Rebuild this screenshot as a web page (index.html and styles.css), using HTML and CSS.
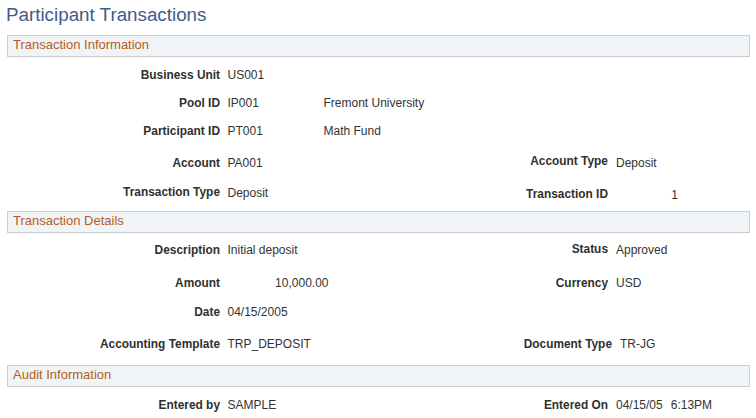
FILE: index.html
```html
<!DOCTYPE html>
<html lang="en">
<head>
<meta charset="utf-8">
<title>Participant Transactions</title>
<link rel="stylesheet" href="styles.css">
</head>
<body>
<div class="page">
  <h1 class="title">Participant Transactions</h1>

  <section class="group">
    <div class="group-head">Transaction Information</div>
    <div class="group-body s1">
      <div class="row h28">
        <div class="lbl">Business Unit</div>
        <div class="val">US001</div>
      </div>
      <div class="row h28">
        <div class="lbl">Pool ID</div>
        <div class="val"><span class="code">IP001</span>Fremont University</div>
      </div>
      <div class="row h32">
        <div class="lbl">Participant ID</div>
        <div class="val"><span class="code">PT001</span>Math Fund</div>
      </div>
      <div class="row h30">
        <div class="lbl">Account</div>
        <div class="val">PA001</div>
        <div class="lbl lbl-r up2">Account Type</div>
        <div class="val val-r">Deposit</div>
      </div>
      <div class="row">
        <div class="lbl up1">Transaction Type</div>
        <div class="val">Deposit</div>
        <div class="lbl lbl-r down1">Transaction ID</div>
        <div class="val val-r down2"><span class="num-id">1</span></div>
      </div>
    </div>
  </section>

  <section class="group">
    <div class="group-head">Transaction Details</div>
    <div class="group-body s2">
      <div class="row h33">
        <div class="lbl">Description</div>
        <div class="val">Initial deposit</div>
        <div class="lbl lbl-r up1">Status</div>
        <div class="val val-r">Approved</div>
      </div>
      <div class="row h29">
        <div class="lbl">Amount</div>
        <div class="val"><span class="amount">10,000.00</span></div>
        <div class="lbl lbl-r">Currency</div>
        <div class="val val-r">USD</div>
      </div>
      <div class="row h32">
        <div class="lbl">Date</div>
        <div class="val">04/15/2005</div>
      </div>
      <div class="row">
        <div class="lbl">Accounting Template</div>
        <div class="val">TRP_DEPOSIT</div>
        <div class="lbl lbl-r lbl-wide">Document Type</div>
        <div class="val val-r val-wide">TR-JG</div>
      </div>
    </div>
  </section>

  <section class="group">
    <div class="group-head">Audit Information</div>
    <div class="group-body s3">
      <div class="row">
        <div class="lbl">Entered by</div>
        <div class="val">SAMPLE</div>
        <div class="lbl lbl-r">Entered On</div>
        <div class="val val-r">04/15/05<span class="time">6:13PM</span></div>
      </div>
    </div>
  </section>
</div>
</body>
</html>
```

FILE: styles.css
```css
* { box-sizing: border-box; }

html, body {
  margin: 0;
  padding: 0;
  background: #ffffff;
}

body {
  font-family: "Liberation Sans", Arial, sans-serif;
  color: #333333;
  width: 756px;
  height: 418px;
  overflow: hidden;
}

.page {
  padding-left: 7px;
  width: 750px;
}

.title {
  margin: 0 0 9px -1px;
  padding-top: 4px;
  font-size: 18.8px;
  line-height: 22px;
  font-weight: normal;
  color: #3d5c88;
  white-space: nowrap;
}

.group-head {
  height: 22px;
  border: 1px solid #c9cdd1;
  background: #f1f4f6;
  color: #b35c1e;
  font-size: 13px;
  line-height: 18px;
  padding: 0 0 2px 5px;
  white-space: nowrap;
}

.group-body.s1 { padding: 11px 0 11px; }
.group-body.s2 { padding: 10px 0 14px; }
.group-body.s3 { padding: 11px 0 0; }

.row {
  display: grid;
  grid-template-columns: 213px 220px 168px 1fr;
  align-items: start;
  height: 14px;
  font-size: 12px;
  line-height: 14px;
  white-space: nowrap;
}

.row.h28 { height: 28px; }
.row.h29 { height: 29px; }
.row.h30 { height: 30px; }
.row.h32 { height: 32px; }
.row.h33 { height: 33px; }

.lbl {
  grid-column: 1;
  text-align: right;
  font-weight: bold;
  font-size: 11.9px;
  color: #303030;
}

.val {
  grid-column: 2;
  padding-left: 7.5px;
  color: #333333;
}

.lbl-r { grid-column: 3; }
.val-r { grid-column: 4; padding-left: 8px; }

.lbl-wide { margin-right: -4px; }
.val-wide { padding-left: 12px; }

.up1 { margin-top: -1.5px; }
.up2 { margin-top: -2px; }
.down1 { margin-top: 1px; }
.down2 { margin-top: 2px; }

.code {
  display: inline-block;
  width: 96px;
}

.amount {
  display: inline-block;
  width: 101px;
  text-align: right;
}

.num-id {
  display: inline-block;
  width: 62px;
  text-align: right;
}

.time { margin-left: 8px; }
```
